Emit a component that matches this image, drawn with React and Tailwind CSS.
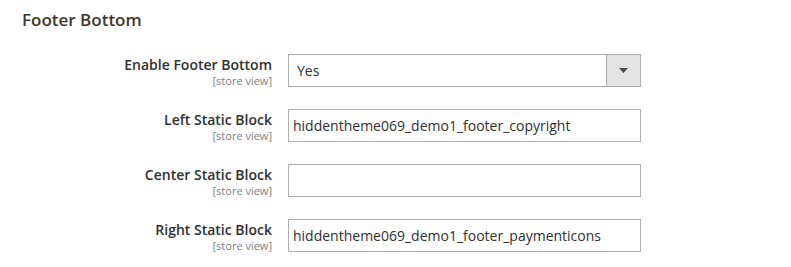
const rows = [
  { label: "Enable Footer Bottom", type: "select", value: "Yes" },
  { label: "Left Static Block", type: "text", value: "hiddentheme069_demo1_footer_copyright" },
  { label: "Center Static Block", type: "text", value: "" },
  { label: "Right Static Block", type: "text", value: "hiddentheme069_demo1_footer_paymenticons" },
];

const App = () => {
  return (
    <div className="min-h-[267px] bg-white pl-[22px] pt-[8px] font-['Open_Sans',sans-serif] text-[#303030]">
      <h2 className="text-[17px] font-semibold leading-[24px] text-[#41362f]">Footer Bottom</h2>

      <div className="mt-[22px] flex flex-col gap-[22px]">
        {rows.map((row) => (
          <div key={row.label} className="flex items-start">
            <div className="w-[250px] pt-[1px] text-right">
              <p className="text-[14px] font-semibold leading-[19px]">{row.label}</p>
              <p className="text-[11px] leading-[13px] text-[#808080]">[store view]</p>
            </div>

            <div className="ml-[16px]">
              {row.type === "select" ? (
                <div className="flex h-[33px] w-[353px] items-stretch border border-[#adadad] bg-white">
                  <span className="flex flex-1 items-center pl-[8px] text-[14px]">{row.value}</span>
                  <span className="flex w-[34px] items-center justify-center border-l border-[#adadad] bg-[#e3e3e3]">
                    <svg width="9" height="5" viewBox="0 0 9 5">
                      <path d="M0 0h9L4.5 5z" fill="#514943" />
                    </svg>
                  </span>
                </div>
              ) : (
                <input
                  type="text"
                  readOnly
                  value={row.value}
                  className="h-[33px] w-[353px] border border-[#adadad] bg-white px-[4px] text-[14px] text-[#303030] outline-none"
                />
              )}
            </div>
          </div>
        ))}
      </div>
    </div>
  );
};

export default App;
